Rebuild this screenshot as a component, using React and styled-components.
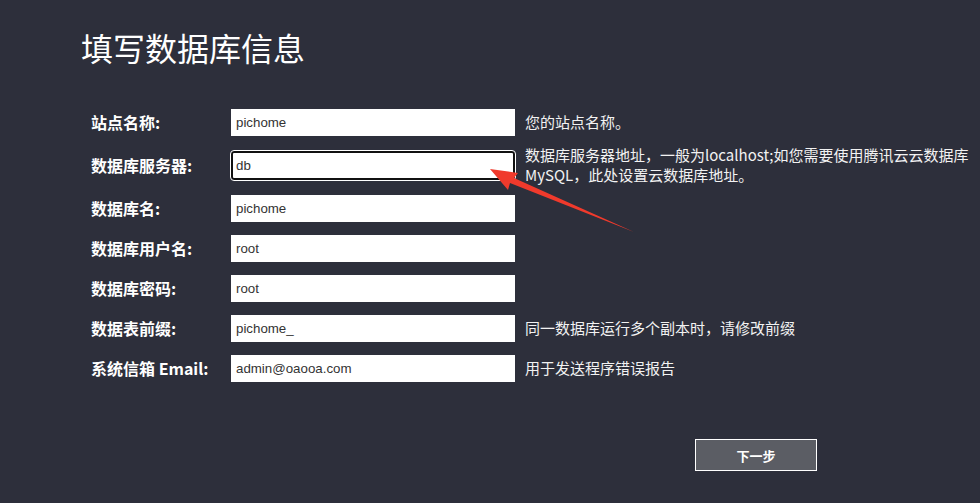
import React from 'react';
import styled, { createGlobalStyle } from 'styled-components';

const GlobalStyle = createGlobalStyle`
  html, body {
    margin: 0;
    padding: 0;
    background: #2d2f3b;
  }
  body {
    font-family: "Noto Sans CJK SC", "Liberation Sans", sans-serif;
  }
`;

const Page = styled.div`
  position: relative;
  width: 980px;
  height: 503px;
  box-sizing: border-box;
  padding: 27px 0 0 81px;
  background: #2d2f3b;
  color: #fff;
  overflow: hidden;
`;

const Title = styled.h1`
  margin: 0 0 35px;
  font-size: 32px;
  font-weight: 400;
  line-height: 40px;
`;

const Form = styled.div`
  display: flex;
  flex-direction: column;
  padding-left: 10px;
`;

const Row = styled.div`
  display: flex;
  align-items: center;
  min-height: 40px;
`;

const Label = styled.label`
  width: 140px;
  flex-shrink: 0;
  font-size: 16px;
  font-weight: 700;
  line-height: 20px;
  white-space: nowrap;
`;

const Input = styled.input`
  width: 284px;
  height: ${(p) => (p.$focused ? '29px' : '27px')};
  box-sizing: border-box;
  padding: 0 5px;
  padding-left: ${(p) => (p.$focused ? '3px' : '5px')};
  border: ${(p) => (p.$focused ? '2px solid #111' : 'none')};
  border-radius: ${(p) => (p.$focused ? '3px' : '0')};
  outline: ${(p) => (p.$focused ? '1px solid #fff' : 'none')};
  background: #fff;
  color: #333;
  font-family: "Liberation Sans", Arial, sans-serif;
  font-size: 13.3px;
  flex-shrink: 0;
`;

const Hint = styled.div`
  margin-left: 10px;
  padding: 3px 0;
  font-size: 15px;
  line-height: 20px;
  color: #f2f2f2;
  white-space: nowrap;
`;

const Footer = styled.div`
  display: flex;
  padding: 51px 0 0 614px;
`;

const NextButton = styled.button`
  width: 122px;
  height: 32px;
  background: #5b5d64;
  border: 1px solid #fff;
  color: #fff;
  font-family: "Noto Sans CJK SC", sans-serif;
  font-size: 13px;
  font-weight: 700;
  cursor: pointer;
`;

const Pointer = styled.svg`
  position: absolute;
  left: 0;
  top: 0;
  pointer-events: none;
`;

const fields = [
  { label: '站点名称:', value: 'pichome', hint: '您的站点名称。' },
  {
    label: '数据库服务器:',
    value: 'db',
    focused: true,
    hint: (
      <>
        数据库服务器地址，一般为localhost;如您需要使用腾讯云云数据库
        <br />
        MySQL，此处设置云数据库地址。
      </>
    ),
  },
  { label: '数据库名:', value: 'pichome' },
  { label: '数据库用户名:', value: 'root' },
  { label: '数据库密码:', value: 'root' },
  { label: '数据表前缀:', value: 'pichome_', hint: '同一数据库运行多个副本时，请修改前缀' },
  { label: '系统信箱 Email:', value: 'admin@oaooa.com', hint: '用于发送程序错误报告' },
];

export default function App() {
  return (
    <>
      <GlobalStyle />
      <Page>
        <Title>填写数据库信息</Title>
        <Form>
          {fields.map((f) => (
            <Row key={f.label}>
              <Label>{f.label}</Label>
              <Input $focused={f.focused} defaultValue={f.value} readOnly />
              {f.hint && <Hint>{f.hint}</Hint>}
            </Row>
          ))}
        </Form>
        <Footer>
          <NextButton>下一步</NextButton>
        </Footer>
        {/* red pointer toward the server field */}
        <Pointer width="980" height="503" viewBox="0 0 980 503">
          <polygon
            points="490,169 518,173 514,178 634,232 510,183 508,190"
            fill="#f03a2c"
          />
        </Pointer>
      </Page>
    </>
  );
}
